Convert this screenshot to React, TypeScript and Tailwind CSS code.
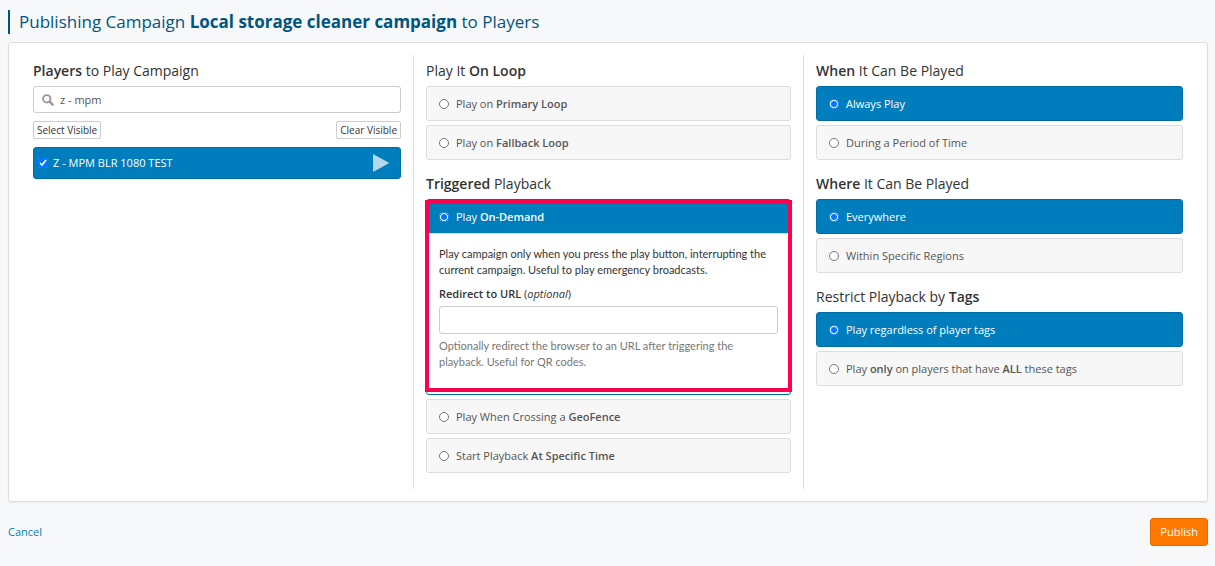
import { useState } from 'react'
import type { ReactNode } from 'react'

type Option = {
  value: string
  label: ReactNode
  details?: ReactNode
}

const loopOptions: Option[] = [
  { value: 'primary', label: <>Play on <b>Primary Loop</b></> },
  { value: 'fallback', label: <>Play on <b>Fallback Loop</b></> },
]

const triggerOptions: Option[] = [
  { value: 'on-demand', label: <>Play <b>On-Demand</b></>, details: <OnDemandDetails /> },
  { value: 'geofence', label: <>Play When Crossing a <b>GeoFence</b></> },
  { value: 'at-time', label: <>Start Playback <b>At Specific Time</b></> },
]

const whenOptions: Option[] = [
  { value: 'always', label: 'Always Play' },
  { value: 'period', label: 'During a Period of Time' },
]

const whereOptions: Option[] = [
  { value: 'everywhere', label: 'Everywhere' },
  { value: 'regions', label: 'Within Specific Regions' },
]

const tagOptions: Option[] = [
  { value: 'any', label: 'Play regardless of player tags' },
  { value: 'all', label: <>Play <b>only</b> on players that have <b>ALL</b> these tags</> },
]

function OnDemandDetails() {
  return (
    <div className="border-t border-[#ddd] px-3 pt-3 pb-6">
      <p className="mb-2 font-['Lato',sans-serif]">
        Play campaign only when you press the play button, interrupting the current campaign. Useful to play
        emergency broadcasts.
      </p>
      <label htmlFor="redirect-url" className="mb-1 block">
        <b>Redirect to URL</b> (<i>optional</i>)
      </label>
      <input
        id="redirect-url"
        type="text"
        className="mb-1 block h-7 w-full rounded-[3px] border border-[#ccc] bg-white px-2"
      />
      <p className="font-['Lato',sans-serif] text-[#777]">
        Optionally redirect the browser to an URL after triggering the <br />
        playback. Useful for QR codes.
      </p>
    </div>
  )
}

type OptionGroupProps = {
  title: ReactNode
  name: string
  options: Option[]
  value: string
  onChange: (value: string) => void
}

function OptionGroup({ title, name, options, value, onChange }: OptionGroupProps) {
  return (
    <section className="mb-3.5">
      <h2 className="mb-[5px] text-sm leading-5">{title}</h2>
      <div className="flex flex-col gap-1">
        {options.map((option) => {
          const selected = option.value === value
          const open = selected && option.details
          return (
            <div
              key={option.value}
              className={
                selected
                  ? 'relative rounded-[3px] border border-[#006ca6] bg-white'
                  : 'rounded-[3px] border border-[#ddd] bg-[#f7f7f7] text-[#555]'
              }
            >
              <label
                className={
                  selected
                    ? 'flex h-[33px] items-center gap-[7px] bg-[#007dbc] px-3 text-white'
                    : 'flex h-[33px] items-center gap-[7px] px-3'
                }
              >
                <input
                  type="radio"
                  name={name}
                  value={option.value}
                  checked={selected}
                  onChange={() => onChange(option.value)}
                  className="size-2.5"
                />
                <span>{option.label}</span>
              </label>
              {open ? option.details : null}
              {open ? (
                <div className="pointer-events-none absolute -inset-x-0.5 top-0 bottom-0.5 border-4 border-[#ff004f]" />
              ) : null}
            </div>
          )
        })}
      </div>
    </section>
  )
}

function SearchIcon() {
  return (
    <svg className="size-3 shrink-0" viewBox="0 0 12 12" fill="none" stroke="#999" aria-hidden="true">
      <circle cx="4.8" cy="4.8" r="3.7" strokeWidth="1.9" />
      <path d="M7.7 7.7 L10.6 10.6" strokeWidth="2.4" strokeLinecap="round" />
    </svg>
  )
}

function PlayersPanel() {
  const [search, setSearch] = useState('z - mpm')
  const [checked, setChecked] = useState(true)

  return (
    <section>
      <h2 className="mb-[5px] text-sm leading-5">
        <b>Players</b> to Play Campaign
      </h2>
      <div className="mb-2 flex h-[27px] items-center gap-1.5 rounded-[3px] border border-[#ccc] px-2">
        <SearchIcon />
        <input
          type="text"
          aria-label="Search players"
          value={search}
          onChange={(event) => setSearch(event.target.value)}
          className="min-w-0 flex-1 text-[#555] outline-none"
        />
      </div>
      <div className="mb-2 flex justify-between text-[10px] leading-4">
        <button
          type="button"
          className="rounded-[2px] border border-[#ccc] bg-white px-[3px]"
          onClick={() => setChecked(true)}
        >
          Select Visible
        </button>
        <button
          type="button"
          className="rounded-[2px] border border-[#ccc] bg-white px-[3px]"
          onClick={() => setChecked(false)}
        >
          Clear Visible
        </button>
      </div>
      <div className="flex h-8 items-center justify-between rounded-[3px] border border-[#006ca6] bg-[#007dbc] pr-[11px] pl-1 text-white">
        <label className="flex items-center gap-[5px]">
          <input
            type="checkbox"
            checked={checked}
            onChange={(event) => setChecked(event.target.checked)}
            className="size-2.5"
          />
          Z - MPM BLR 1080 TEST
        </label>
        <svg className="h-[18px] w-4" viewBox="0 0 16 18" fill="#b2d8ea" aria-hidden="true">
          <path d="M0 1 Q0 0 1 .4 L15.4 8.4 Q16.2 9 15.4 9.6 L1 17.6 Q0 18 0 17 Z" />
        </svg>
      </div>
    </section>
  )
}

export default function App() {
  const [playback, setPlayback] = useState('on-demand')
  const [when, setWhen] = useState('always')
  const [where, setWhere] = useState('everywhere')
  const [tags, setTags] = useState('any')

  return (
    <main className="min-h-screen bg-[#f7f8fa] px-2 pt-2.5 pb-5 pr-[7px] font-['Open_Sans',sans-serif] text-[11px] leading-4 text-[#333] [&_b]:font-semibold">
      <h1 className="mb-2 border-l-2 border-[#005580] pl-[9px] text-[17px] leading-6 text-[#005580]">
        Publishing Campaign <strong>Local storage cleaner campaign</strong> to Players
      </h1>

      <div className="grid grid-cols-[392fr_391fr_391fr] rounded-[3px] border border-[#ddd] bg-white p-3 shadow-xs">
        <div className="px-3 pt-1.5">
          <PlayersPanel />
        </div>
        <div className="border-x border-[#ddd] px-3 pt-1.5 pb-0.5">
          <OptionGroup
            title={<>Play It <b>On Loop</b></>}
            name="playback"
            options={loopOptions}
            value={playback}
            onChange={setPlayback}
          />
          <OptionGroup
            title={<><b>Triggered</b> Playback</>}
            name="playback"
            options={triggerOptions}
            value={playback}
            onChange={setPlayback}
          />
        </div>
        <div className="px-3 pt-1.5">
          <OptionGroup
            title={<><b>When</b> It Can Be Played</>}
            name="when"
            options={whenOptions}
            value={when}
            onChange={setWhen}
          />
          <OptionGroup
            title={<><b>Where</b> It Can Be Played</>}
            name="where"
            options={whereOptions}
            value={where}
            onChange={setWhere}
          />
          <OptionGroup
            title={<>Restrict Playback by <b>Tags</b></>}
            name="tags"
            options={tagOptions}
            value={tags}
            onChange={setTags}
          />
        </div>
      </div>

      <footer className="mt-4 flex items-center justify-between">
        <a href="#" className="text-[#007dbc]">
          Cancel
        </a>
        <button type="button" className="h-7 rounded-[3px] border border-[#e56b00] bg-[#ff7800] px-[9px] text-white">
          Publish
        </button>
      </footer>
    </main>
  )
}
